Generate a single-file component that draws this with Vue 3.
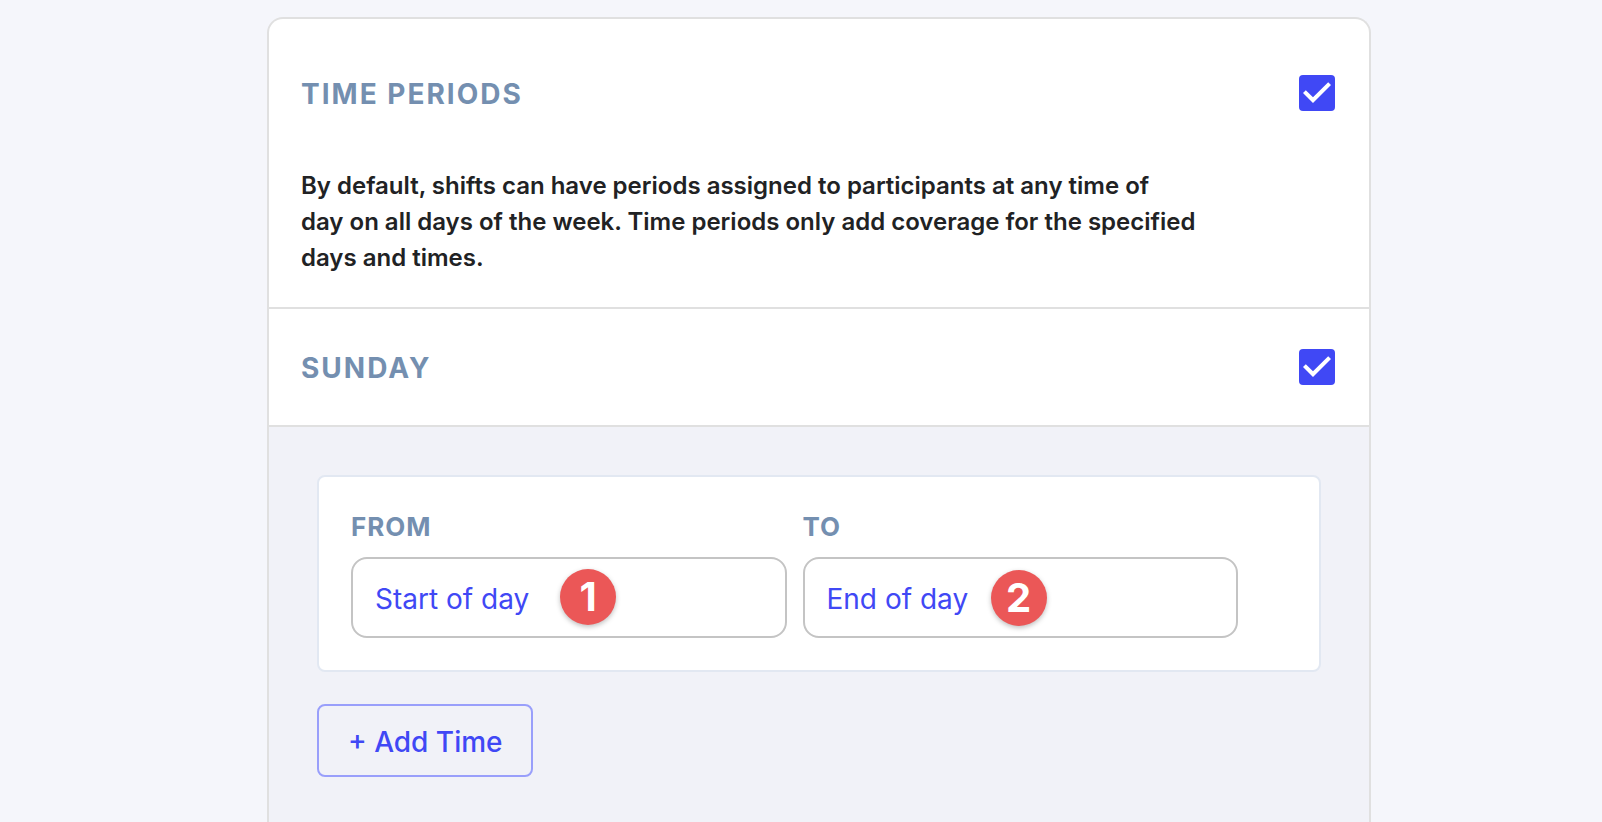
<script setup>
import { ref } from 'vue'

const periodsEnabled = ref(true)
const sundayEnabled = ref(true)
const from = ref('Start of day')
const to = ref('End of day')
</script>

<template>
  <main class="page">
    <section class="card">
      <header class="intro">
        <div class="row">
          <h1 id="periods-title" class="title">TIME PERIODS</h1>
          <span class="check">
            <input v-model="periodsEnabled" type="checkbox" aria-labelledby="periods-title" />
            <svg v-if="periodsEnabled" viewBox="3 3 18 18" aria-hidden="true">
              <path d="M10 17 5 12l1.41-1.41L10 14.17l7.59-7.59L19 8z" />
            </svg>
          </span>
        </div>
        <p class="description">
          By default, shifts can have periods assigned to participants at any time of<br />
          day on all days of the week. Time periods only add coverage for the specified<br />
          days and times.
        </p>
      </header>

      <div class="row day">
        <h2 id="sunday-title" class="title">SUNDAY</h2>
        <span class="check">
          <input v-model="sundayEnabled" type="checkbox" aria-labelledby="sunday-title" />
          <svg v-if="sundayEnabled" viewBox="3 3 18 18" aria-hidden="true">
            <path d="M10 17 5 12l1.41-1.41L10 14.17l7.59-7.59L19 8z" />
          </svg>
        </span>
      </div>

      <div class="times">
        <div class="period">
          <div class="field">
            <label for="from">FROM</label>
            <div class="control">
              <input id="from" v-model="from" type="text" />
              <span class="badge first">1</span>
            </div>
          </div>
          <div class="field">
            <label for="to">TO</label>
            <div class="control">
              <input id="to" v-model="to" type="text" />
              <span class="badge second">2</span>
            </div>
          </div>
        </div>
        <button type="button" class="add">+ Add Time</button>
      </div>
    </section>
  </main>
</template>

<style>
body {
  background: #f5f6fb;
}
</style>

<style scoped>
.page {
  box-sizing: border-box;
  display: flex;
  height: 100vh;
  padding: 17px 231px 0 267px;
  overflow: hidden;
  font-family: Inter, "Liberation Sans", sans-serif;
  color: #212224;
}
.card {
  box-sizing: border-box;
  display: flex;
  flex: 1;
  flex-direction: column;
  min-width: 0;
  border: 2px solid #e0e0e0;
  border-bottom: 0;
  border-radius: 16px 16px 0 0;
  background: #fff;
  overflow: hidden;
}
.intro {
  padding-bottom: 31px;
  border-bottom: 2px solid #e0e0e0;
}
.row {
  display: flex;
  align-items: center;
  justify-content: space-between;
  padding: 0 34px 0 32px;
}
.intro .row {
  padding-top: 56px;
}
.title {
  margin: 0;
  padding-top: 2px;
  font-size: 28px;
  line-height: 34px;
  font-weight: 700;
  letter-spacing: 2px;
  color: #748fb0;
}
.check {
  position: relative;
  display: block;
  width: 36px;
  height: 36px;
}
.check input {
  appearance: none;
  display: block;
  width: 36px;
  height: 36px;
  margin: 0;
  border-radius: 4px;
  background: #fff;
  box-shadow: inset 0 0 0 4px #748fb0;
}
.check input:checked {
  background: #4048f5;
  box-shadow: none;
}
.check svg {
  position: absolute;
  inset: 0;
  fill: #fff;
  pointer-events: none;
}
.description {
  margin: 57px 0 0;
  padding-left: 32px;
  font-size: 24px;
  line-height: 36px;
  font-weight: 600;
}
.day {
  padding-top: 40px;
  padding-bottom: 40px;
  border-bottom: 2px solid #e0e0e0;
}
.times {
  flex: 1;
  padding: 48px;
  background: #f1f2f8;
}
.period {
  display: flex;
  gap: 16px;
  padding: 32px 81px 32px 32px;
  border: 2px solid #e2e8f2;
  border-radius: 8px;
  background: #fff;
}
.field {
  flex: 1;
  min-width: 0;
}
.field label {
  display: block;
  margin-bottom: 12px;
  font-size: 26px;
  line-height: 36px;
  font-weight: 700;
  letter-spacing: 1px;
  color: #748fb0;
}
.control {
  position: relative;
}
.control input {
  box-sizing: border-box;
  display: block;
  width: 100%;
  height: 81px;
  padding: 3px 22px 0;
  border: 2px solid #c4c4c4;
  border-radius: 16px;
  background: #fff;
  font: 400 28px/36px Inter, "Liberation Sans", sans-serif;
  color: #4048f5;
}
.badge {
  position: absolute;
  top: 12px;
  width: 56px;
  height: 56px;
  border-radius: 50%;
  background: #eb5757;
  box-shadow: 0 2px 5px rgba(0, 0, 0, 0.25);
  font-size: 40px;
  line-height: 56px;
  font-weight: 700;
  text-align: center;
  color: #fff;
}
.badge.first {
  left: 209px;
}
.badge.second {
  top: 13px;
  left: 188px;
}
.add {
  margin-top: 32px;
  padding: 18px 28px 15px 29px;
  border: 2px solid #999ffb;
  border-radius: 8px;
  background: transparent;
  font: 500 28px/36px Inter, "Liberation Sans", sans-serif;
  color: #4048f5;
}
</style>
